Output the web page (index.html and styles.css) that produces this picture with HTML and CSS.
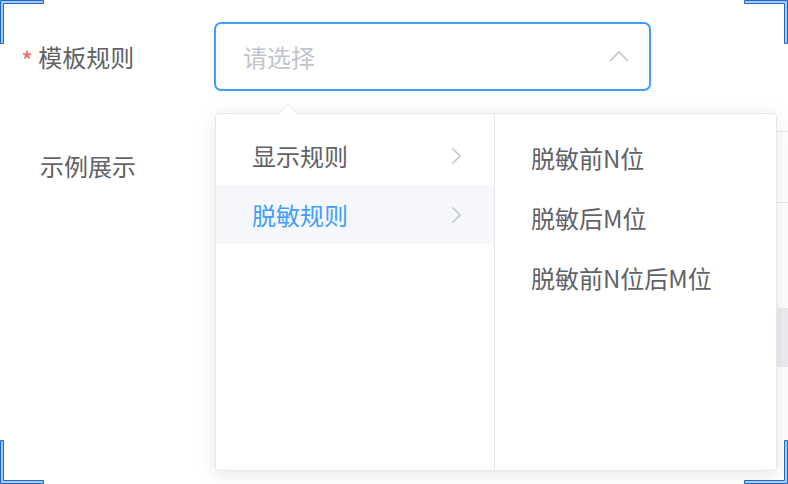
FILE: index.html
```html
<!DOCTYPE html>
<html lang="zh-CN">
<head>
<meta charset="utf-8">
<link rel="stylesheet" href="styles.css">
</head>
<body>
<div class="page">
  <div class="form">
    <div class="row row-rule">
      <div class="label"><span class="star">*</span>模板规则</div>
      <div class="select">
        <span class="placeholder">请选择</span>
        <svg class="up" width="20" height="12" viewBox="0 0 20 12"><polyline points="1,11 10,2 19,11" fill="none" stroke="#c0c4cc" stroke-width="1.6"/></svg>
      </div>
    </div>
    <div class="row row-demo">
      <div class="label label-plain">示例展示</div>
      <div class="table">
        <div class="thead"></div>
        <div class="tspace"></div>
        <div class="trow-hover"></div>
      </div>
    </div>
  </div>

  <div class="dropdown">
    <div class="pointer"></div>
    <div class="panel panel-first">
      <div class="item item-l">显示规则<svg class="chev" width="11" height="18" viewBox="0 0 11 18"><polyline points="1.5,1.5 9,9 1.5,16.5" fill="none" stroke="#c0c4cc" stroke-width="1.6"/></svg></div>
      <div class="item item-l active">脱敏规则<svg class="chev" width="11" height="18" viewBox="0 0 11 18"><polyline points="1.5,1.5 9,9 1.5,16.5" fill="none" stroke="#c0c4cc" stroke-width="1.6"/></svg></div>
    </div>
    <div class="panel panel-second">
      <div class="item item-r">脱敏前N位</div>
      <div class="item item-r">脱敏后M位</div>
      <div class="item item-r">脱敏前N位后M位</div>
    </div>
  </div>

  <svg class="corner corner-tl" width="45" height="45" viewBox="0 0 45 45"><path d="M0.5 0.5 H43.5 V3.5 H3.5 V43.5 H0.5 Z" fill="#a9c9f2" stroke="#1a6acb" stroke-width="1"/></svg>
  <svg class="corner corner-tr" width="45" height="45" viewBox="0 0 45 45"><path d="M44.5 0.5 H1.5 V3.5 H41.5 V43.5 H44.5 Z" fill="#a9c9f2" stroke="#1a6acb" stroke-width="1"/></svg>
  <svg class="corner corner-bl" width="45" height="45" viewBox="0 0 45 45"><path d="M0.5 44.5 H43.5 V41.5 H3.5 V1.5 H0.5 Z" fill="#a9c9f2" stroke="#1a6acb" stroke-width="1"/></svg>
  <svg class="corner corner-br" width="45" height="45" viewBox="0 0 45 45"><path d="M44.5 44.5 H1.5 V41.5 H41.5 V1.5 H44.5 Z" fill="#a9c9f2" stroke="#1a6acb" stroke-width="1"/></svg>
</div>
</body>
</html>
```

FILE: styles.css
```css
* { box-sizing: border-box; }
html, body { margin: 0; padding: 0; background: #fff; }
body {
  font-family: "Noto Sans CJK SC", "Noto Sans", sans-serif;
  color: #606266;
}
.page {
  position: relative;
  width: 788px;
  height: 484px;
  overflow: hidden;
  background: #fff;
}
.form {
  display: flex;
  flex-direction: column;
  padding-top: 22px;
}
.row {
  display: flex;
  align-items: flex-start;
}
.row-demo { margin-top: 40px; }
.label {
  width: 214px;
  height: 69px;
  display: flex;
  align-items: center;
  padding-left: 21px;
  font-size: 24px;
  color: #606266;
}
.label-plain { padding-left: 40px; }
.star {
  color: #f56c6c;
  margin-right: 5px;
  font-size: 26px;
  position: relative;
  top: 3px;
}
.select {
  width: 437px;
  height: 69px;
  border: 2px solid #409eff;
  border-radius: 7px;
  display: flex;
  align-items: center;
  justify-content: space-between;
  padding-left: 27px;
  padding-right: 20px;
}
.placeholder {
  font-size: 24px;
  color: #c0c4cc;
}
.up { margin-top: -2px; }
.table {
  flex: 1;
  margin-left: 3px;
  border-top: 1px solid #e4e7ed;
  display: flex;
  flex-direction: column;
}
.thead {
  height: 71px;
  border-bottom: 1px solid #e4e7ed;
}
.tspace { height: 105px; }
.trow-hover {
  height: 59px;
  background: #ebedf0;
}

.dropdown {
  position: absolute;
  left: 215px;
  top: 113px;
  width: 562px;
  height: 358px;
  background: #fff;
  border: 1px solid #e4e7ed;
  border-radius: 3px;
  box-shadow: 0 3px 20px 0 rgba(0, 0, 0, 0.1);
  display: flex;
}
.pointer {
  position: absolute;
  left: 62px;
  top: -10px;
  width: 0;
  height: 0;
  border-left: 10px solid transparent;
  border-right: 10px solid transparent;
  border-bottom: 10px solid #e4e7ed;
}
.pointer::after {
  content: "";
  position: absolute;
  left: -9px;
  top: 1px;
  border-left: 9px solid transparent;
  border-right: 9px solid transparent;
  border-bottom: 9px solid #fff;
}
.panel {
  height: 100%;
  display: flex;
  flex-direction: column;
}
.panel-first {
  width: 279px;
  border-right: 1.5px solid #e4e7ed;
  padding-top: 12px;
}
.panel-second {
  flex: 1;
  padding-top: 13px;
}
.item {
  display: flex;
  align-items: center;
  font-size: 24px;
  color: #606266;
  padding-left: 36px;
}
.item-l {
  height: 59px;
  justify-content: space-between;
  padding-right: 32px;
}
.item-r { height: 60px; }
.active {
  color: #409eff;
  background: #f5f7fa;
}
.chev { display: block; }

.corner {
  position: absolute;
  display: block;
}
.corner-tl { left: 0; top: 0; }
.corner-tr { right: 0; top: 0; }
.corner-bl { left: 0; bottom: 0; }
.corner-br { right: 0; bottom: 0; }
```
